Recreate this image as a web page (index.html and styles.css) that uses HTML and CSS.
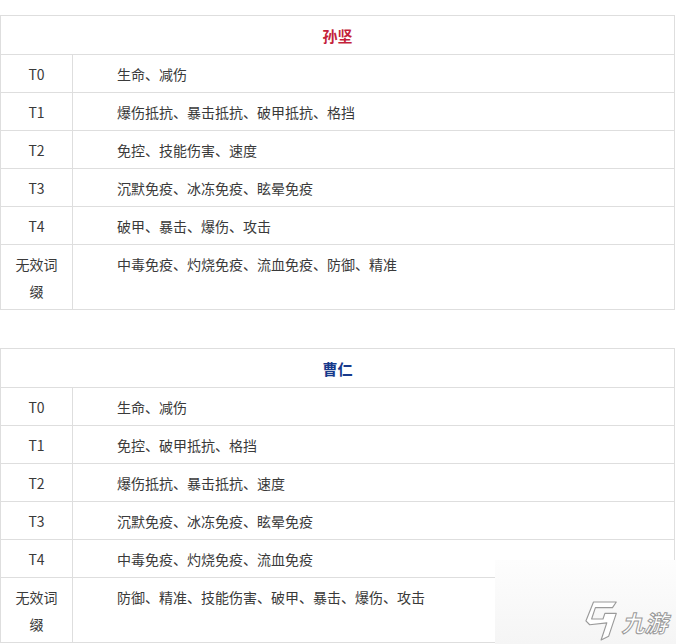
FILE: index.html
```html
<!DOCTYPE html>
<html lang="zh-CN">
<head>
<meta charset="utf-8">
<title>词缀</title>
<link rel="stylesheet" href="styles.css">
</head>
<body>
<div class="page">
  <table class="affix">
    <colgroup><col class="col-tier"><col class="col-desc"></colgroup>
    <tr><th colspan="2" class="hero red">孙坚</th></tr>
    <tr><td class="tier">T0</td><td class="desc">生命、减伤</td></tr>
    <tr><td class="tier">T1</td><td class="desc">爆伤抵抗、暴击抵抗、破甲抵抗、格挡</td></tr>
    <tr><td class="tier">T2</td><td class="desc">免控、技能伤害、速度</td></tr>
    <tr><td class="tier">T3</td><td class="desc">沉默免疫、冰冻免疫、眩晕免疫</td></tr>
    <tr><td class="tier">T4</td><td class="desc">破甲、暴击、爆伤、攻击</td></tr>
    <tr><td class="tier">无效词缀</td><td class="desc top">中毒免疫、灼烧免疫、流血免疫、防御、精准</td></tr>
  </table>

  <table class="affix">
    <colgroup><col class="col-tier"><col class="col-desc"></colgroup>
    <tr><th colspan="2" class="hero blue">曹仁</th></tr>
    <tr><td class="tier">T0</td><td class="desc">生命、减伤</td></tr>
    <tr><td class="tier">T1</td><td class="desc">免控、破甲抵抗、格挡</td></tr>
    <tr><td class="tier">T2</td><td class="desc">爆伤抵抗、暴击抵抗、速度</td></tr>
    <tr><td class="tier">T3</td><td class="desc">沉默免疫、冰冻免疫、眩晕免疫</td></tr>
    <tr><td class="tier">T4</td><td class="desc">中毒免疫、灼烧免疫、流血免疫</td></tr>
    <tr><td class="tier">无效词缀</td><td class="desc top">防御、精准、技能伤害、破甲、暴击、爆伤、攻击</td></tr>
  </table>
</div>

<div class="watermark">
  <svg class="wm-logo" width="38" height="44" viewBox="0 0 40 46">
    <path d="M10 4 L34 4 L30 10 L12 10 L8 22 L20 22 L22 16 L34 16 L26 40 L18 44 L24 26 L6 28 L2 24 Z" fill="#fff" stroke="#9a9a9a" stroke-width="1.2" stroke-linejoin="round"/>
  </svg>
  <span class="wm-text">九游</span>
</div>
</body>
</html>
```

FILE: styles.css
```css
html, body {
  margin: 0;
  padding: 0;
  background: #fff;
}

body {
  font-family: "Microsoft YaHei", "Noto Sans CJK SC", "Noto Sans", sans-serif;
  color: #3a3a3a;
  font-size: 14px;
  overflow: hidden;
}

.page {
  padding-top: 15px;
  width: 674px;
}

.affix {
  width: 674px;
  border-collapse: collapse;
  margin-bottom: 38px;
  table-layout: fixed;
}

.affix:last-child {
  margin-bottom: 0;
}

.col-tier { width: 72px; }
.col-desc { width: 602px; }

.affix th,
.affix td {
  border: 1px solid #dedede;
  line-height: 27px;
  padding: 6px 0 4px 0;
}

.affix td.tier {
  text-align: center;
  vertical-align: middle;
  padding-left: 8px;
  padding-right: 8px;
}

.affix td.desc {
  padding-left: 44px;
  vertical-align: middle;
  text-align: left;
}

.affix td.desc.top {
  vertical-align: top;
}

.affix th.hero {
  font-weight: bold;
  font-size: 15px;
  text-align: center;
  padding-top: 6px;
  padding-bottom: 5px;
}

.red { color: #c41f3a; }
.blue { color: #173a8c; }

.watermark {
  position: absolute;
  left: 495px;
  top: 560px;
  width: 181px;
  height: 84px;
  background: linear-gradient(to bottom, #fdfdfd 0%, #f5f5f5 100%);
  display: flex;
  align-items: flex-end;
  justify-content: flex-end;
  padding: 0 6px 2px 0;
  box-sizing: border-box;
}

.wm-text {
  font-family: "Noto Sans CJK SC", sans-serif;
  font-size: 23px;
  font-weight: bold;
  color: #ffffff;
  -webkit-text-stroke: 1px #9a9a9a;
  line-height: 28px;
  margin-left: 2px;
  margin-bottom: 6px;
  transform: skewX(-14deg);
}
```
